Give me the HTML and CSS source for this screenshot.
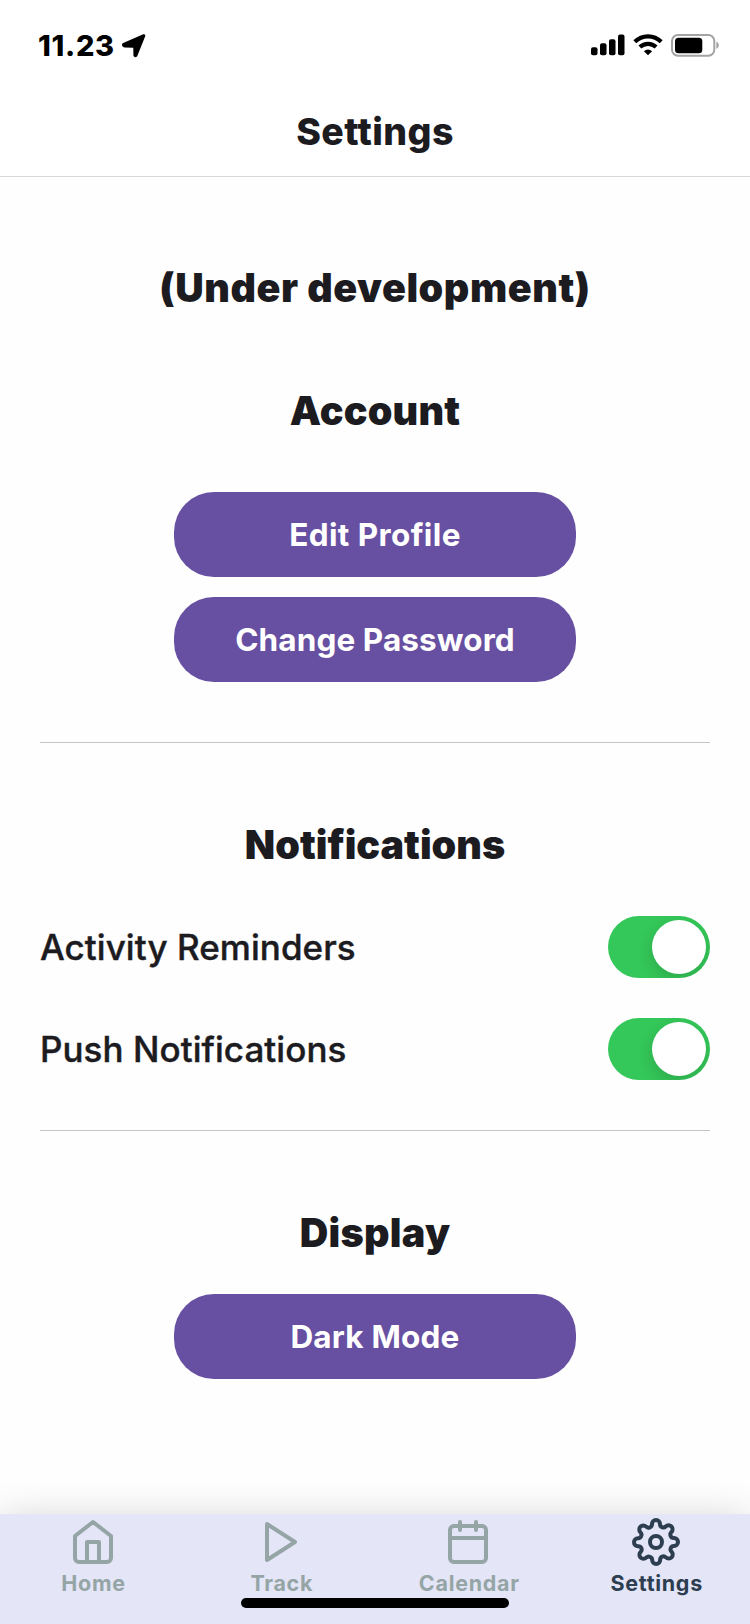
FILE: index.html
```html
<!DOCTYPE html>
<html lang="en">
<head>
<meta charset="utf-8">
<title>Settings</title>
<link rel="stylesheet" href="styles.css">
</head>
<body>
<div class="screen">
  <div class="status">
    <div class="status-left">
      <span class="time">11.23</span>
      <svg class="location" width="24" height="24" viewBox="0 0 24 24"><path d="M1.200 8.900 21.200.3c1.300-.5 2.500.7 2 2L15.400 21.800c-.9 2.200-4 1.700-4-.7l-.1-7.300-8.800-.3C-.1 13.400-.9 9.900 1.200 8.900Z"/></svg>
    </div>
    <div class="status-right">
      <svg width="34" height="22" viewBox="0 0 34 22"><rect y="13.300" width="6.500" height="8" rx="2"/><rect x="9" y="9.300" width="6.500" height="12" rx="2"/><rect x="18" y="5.300" width="6.500" height="16" rx="2"/><rect x="27" y=".5" width="6.500" height="20.800" rx="2"/></svg>
      <svg width="30" height="22" viewBox="0 0 30 22"><g fill="none" stroke="#000" stroke-width="4.200"><path d="M1.800 7.800a18.800 18.800 0 0 1 26.400 0"/><path d="M6.900 13.100a11.600 11.600 0 0 1 16.200 0"/></g><path d="M15 21.200 10.900 17.200a5.900 5.900 0 0 1 8.200 0Z"/></svg>
      <svg width="49" height="23" viewBox="0 0 49 23"><rect x="1" y="1" width="42.300" height="20.800" rx="6" fill="none" stroke="#a3a3a3" stroke-width="2"/><rect x="4" y="3.800" width="27.300" height="15.400" rx="3.500"/><path d="M45.300 7.800c3.400 1.200 3.400 5.800 0 7Z" fill="#a3a3a3"/></svg>
    </div>
  </div>
  <header class="header"><h1 class="title">Settings</h1></header>
  <main class="content">
    <h2 class="heading notice">(Under development)</h2>
    <h2 class="heading account">Account</h2>
    <div class="buttons">
      <button class="button edit">Edit Profile</button>
      <button class="button password">Change Password</button>
    </div>
    <hr class="divider">
    <h2 class="heading notifications">Notifications</h2>
    <div class="rows">
      <div class="row"><span class="label">Activity Reminders</span><span class="switch"><span class="knob"></span></span></div>
      <div class="row"><span class="label">Push Notifications</span><span class="switch"><span class="knob"></span></span></div>
    </div>
    <hr class="divider">
    <h2 class="heading display">Display</h2>
    <button class="button dark">Dark Mode</button>
  </main>
  <nav class="tabs">
    <a class="tab"><svg class="icon" viewBox="0 0 24 24"><path d="M3 9l9-7 9 7v11a2 2 0 0 1-2 2H5a2 2 0 0 1-2-2z"/><path d="M9 22V12h6v10"/></svg><span class="tab-label home">Home</span></a>
    <a class="tab"><svg class="icon" viewBox="0 0 24 24"><path d="M5 3l14 9-14 9z"/></svg><span class="tab-label track">Track</span></a>
    <a class="tab"><svg class="icon" viewBox="0 0 24 24"><rect x="3" y="4" width="18" height="18" rx="2"/><path d="M16 2v4M8 2v4M3 10h18"/></svg><span class="tab-label calendar">Calendar</span></a>
    <a class="tab active"><svg class="icon" viewBox="0 0 24 24"><circle cx="12" cy="12" r="3"/><path d="M19.4 15a1.650 1.650 0 0 0 .33 1.820l.06.06a2 2 0 0 1 0 2.830 2 2 0 0 1-2.830 0l-.06-.06a1.650 1.650 0 0 0-1.820-.33 1.650 1.650 0 0 0-1 1.510V21a2 2 0 0 1-2 2 2 2 0 0 1-2-2v-.09A1.650 1.650 0 0 0 9 19.4a1.650 1.650 0 0 0-1.820.33l-.06.06a2 2 0 0 1-2.830 0 2 2 0 0 1 0-2.830l.06-.06a1.650 1.650 0 0 0 .33-1.820 1.650 1.650 0 0 0-1.510-1H3a2 2 0 0 1-2-2 2 2 0 0 1 2-2h.09A1.650 1.650 0 0 0 4.600 9a1.650 1.650 0 0 0-.33-1.820l-.06-.06a2 2 0 0 1 0-2.830 2 2 0 0 1 2.830 0l.06.06a1.650 1.650 0 0 0 1.820.33H9a1.650 1.650 0 0 0 1-1.510V3a2 2 0 0 1 2-2 2 2 0 0 1 2 2v.09a1.650 1.650 0 0 0 1 1.510 1.650 1.650 0 0 0 1.820-.33l.06-.06a2 2 0 0 1 2.830 0 2 2 0 0 1 0 2.830l-.06.06a1.650 1.650 0 0 0-.33 1.820V9a1.650 1.650 0 0 0 1.510 1H21a2 2 0 0 1 2 2 2 2 0 0 1-2 2h-.09a1.650 1.650 0 0 0-1.510 1z"/></svg><span class="tab-label settings">Settings</span></a>
    <div class="home-indicator"></div>
  </nav>
</div>
</body>
</html>
```
FILE: styles.css
```css
* { box-sizing: border-box; }
body { margin: 0; background: #fff; font-family: Inter, "Noto Sans", sans-serif; color: #1c1b1f; }
.screen { width: 750px; height: 1624px; display: flex; flex-direction: column; overflow: hidden; }

.status { height: 88px; padding: 33px 30px 0 38px; display: flex; justify-content: space-between; align-items: flex-start; color: #000; }
.status-left { display: flex; gap: 7px; }
.status-right { display: flex; align-items: flex-start; gap: 8px; padding-top: 1px; }
.status svg { display: block; }
.location { margin-top: 1px; }
.time { width: 77px; font-size: 29px; font-weight: 800; line-height: 25px; letter-spacing: .7px; white-space: nowrap; }

.header { height: 89px; border-bottom: 1px solid #d8d8d8; display: flex; justify-content: center; }
.title { margin: 24px 0 0; font-size: 37.500px; font-weight: 800; line-height: 40px; letter-spacing: .4px; }

.content { flex: 1; padding: 86px 40px 0; display: flex; flex-direction: column; align-items: center; background: #fefefe; }
.heading { margin: 0; font-size: 39.500px; font-weight: 900; line-height: 50px; white-space: nowrap; }
.notice { letter-spacing: .55px; }
.account { margin-top: 73px; letter-spacing: .2px; }
.buttons { margin-top: 56px; display: flex; flex-direction: column; gap: 20px; }
.button { width: 402px; height: 85px; padding: 0; border: 0; border-radius: 40px; background: #6750a2; color: #fff; font: 700 31.500px/85px Inter, "Noto Sans", sans-serif; white-space: nowrap; }
.edit { letter-spacing: .4px; }
.password { letter-spacing: .1px; }
.dark { letter-spacing: .2px; }
.divider { align-self: stretch; height: 1px; margin: 60px 0 0; border: 0; background: #c4c4c6; }
.notifications { margin-top: 77px; }
.rows { align-self: stretch; margin-top: 46px; display: flex; flex-direction: column; gap: 40px; }
.row { height: 62px; display: flex; justify-content: space-between; align-items: center; }
.label { font-size: 35px; font-weight: 500; line-height: 62px; letter-spacing: .05px; -webkit-text-stroke: .4px currentColor; white-space: nowrap; }
.switch { width: 102px; height: 62px; padding: 4px; border-radius: 31px; background: #34c759; display: flex; justify-content: flex-end; overflow: hidden; }
.knob { width: 54px; height: 54px; border-radius: 50%; background: #fff; box-shadow: 0 6px 16px rgba(0, 0, 0, .15); }
.rows + .divider { margin-top: 50px; }
.display { margin-top: 77px; letter-spacing: .3px; }
.dark { margin-top: 36px; }

.tabs { position: relative; height: 110px; flex: none; padding: 4px 0 0; display: grid; grid-template-columns: 187px 188px 187px 188px; background: #e4e5f7; box-shadow: 0 0 36px rgba(0, 0, 0, .14); }
.tab { display: flex; flex-direction: column; align-items: center; color: #95a5a6; }
.icon { width: 48px; height: 48px; fill: none; stroke: currentColor; stroke-width: 2; stroke-linecap: round; stroke-linejoin: round; }
.tab:nth-child(odd) .icon { margin-right: 1px; }
.tab-label { margin-top: 5px; padding-left: 1.500px; font-size: 21.500px; font-weight: 700; line-height: 24px; letter-spacing: .7px; }
.home { padding-left: 0; }
.active { color: #2c3e50; }
.home-indicator { position: absolute; left: 241px; top: 84px; width: 268px; height: 10px; border-radius: 5px; background: #000; }
```
